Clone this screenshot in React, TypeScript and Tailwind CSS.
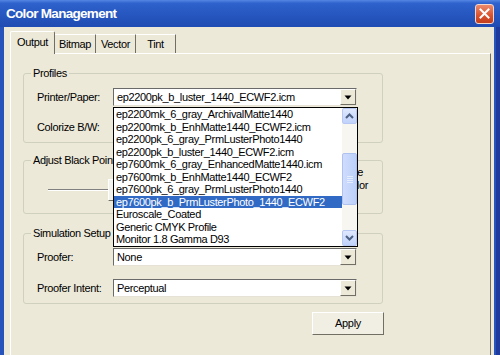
import React from "react";

const items = [
  "ep2200mk_6_gray_ArchivalMatte1440",
  "ep2200mk_b_EnhMatte1440_ECWF2.icm",
  "ep2200pk_6_gray_PrmLusterPhoto1440",
  "ep2200pk_b_luster_1440_ECWF2.icm",
  "ep7600mk_6_gray_EnhancedMatte1440.icm",
  "ep7600mk_b_EnhMatte1440_ECWF2",
  "ep7600pk_6_gray_PrmLusterPhoto1440",
  "ep7600pk_b_PrmLusterPhoto_1440_ECWF2",
  "Euroscale_Coated",
  "Generic CMYK Profile",
  "Monitor 1.8 Gamma D93",
];

function DownTri() {
  return (
    <svg width="8" height="5" viewBox="0 0 8 5">
      <path d="M0.5 0.5 L7.5 0.5 L4 4.5 Z" fill="#000" />
    </svg>
  );
}

function Select({ value }: { value: string }) {
  return (
    <div className="w-[244px] h-[18px] bg-white border-t border-l border-[#6a6a6a] border-r border-b border-r-[#e6e3d6] border-b-[#e6e3d6] flex items-center">
      <div className="flex-1 pl-[3px] leading-[16px] whitespace-nowrap overflow-hidden">{value}</div>
      <div className="w-[16px] h-[16px] bg-[#ece9d8] border-t border-l border-white border-r border-b border-r-[#716f64] border-b-[#716f64] flex items-center justify-center">
        <DownTri />
      </div>
    </div>
  );
}

function Group({
  label,
  className,
  children,
}: {
  label: string;
  className: string;
  children?: React.ReactNode;
}) {
  return (
    <div className={`relative w-[360px] border border-[#d0d0bf] rounded-[3px] ${className}`}>
      <div className="absolute -top-[8px] left-[7px] px-[2px] bg-[#ece9d8] leading-[14px]">{label}</div>
      {children}
    </div>
  );
}

function Chevron({ up }: { up: boolean }) {
  return (
    <svg width="9" height="6" viewBox="0 0 9 6">
      <path
        d={up ? "M1 5 L4.5 1.5 L8 5" : "M1 1 L4.5 4.5 L8 1"}
        fill="none"
        stroke="#4d6185"
        strokeWidth="2"
      />
    </svg>
  );
}

export default function App() {
  return (
    <div className="relative w-[500px] h-[355px] overflow-hidden bg-[#2654bb] flex flex-col font-['Liberation_Sans',Arial,sans-serif] text-[11px] tracking-[-0.35px] text-black">
      {/* Title bar */}
      <div className="h-[27px] shrink-0 flex items-center justify-between pl-[6px] pr-[6px] bg-[linear-gradient(to_bottom,#5486e4_0%,#2f62cc_12%,#2656bf_55%,#1f4cb2_100%)]">
        <div className="text-white font-bold text-[13.5px] tracking-[-0.7px] leading-[16px]">
          Color Management
        </div>
        <div className="w-[19px] h-[20px] rounded-[3px] border border-[#f4d6cc] bg-[linear-gradient(to_bottom,#eb8a6c,#d9512d_60%,#c23e1c)] flex items-center justify-center">
          <svg width="11" height="11" viewBox="0 0 11 11">
            <path d="M1.5 1.5 L9.5 9.5 M9.5 1.5 L1.5 9.5" stroke="#fff" strokeWidth="2" strokeLinecap="square" />
          </svg>
        </div>
      </div>

      {/* Body */}
      <div className="flex-1 ml-[4px] mr-[6px] bg-[#ece9d8] pl-[6px] pr-[3px] pt-[4px] flex flex-col relative">
        <div className="absolute right-[-6px] top-0 bottom-0 w-[4px] bg-[#1e3a9c]" />
        {/* Tabs */}
        <div className="flex items-end h-[23px] -mb-px relative z-10">
          <div className="w-[45px] h-[23px] bg-[#ece9d8] border-t border-l border-white border-r border-r-[#716f64] rounded-t-[2px] flex items-center justify-center pb-[2px]">
            Output
          </div>
          <div className="w-[41px] h-[19px] mb-px border-t border-white border-r border-r-[#716f64] flex items-center justify-center">
            Bitmap
          </div>
          <div className="w-[40px] h-[19px] mb-px border-t border-white border-r border-r-[#716f64] flex items-center justify-center">
            Vector
          </div>
          <div className="w-[40px] h-[19px] mb-px border-t border-white border-r border-r-[#716f64] flex items-center justify-center">
            Tint
          </div>
        </div>

        {/* Panel */}
        <div className="flex-1 border-t border-l border-white border-r border-r-[#716f64] pl-[12px] flex flex-col">
          <Group label="Profiles" className="mt-[19px] h-[70px] pt-[14px] pl-[13px] flex flex-col gap-[12px]">
            <div className="flex items-center h-[18px]">
              <div className="w-[76px]">Printer/Paper:</div>
              <Select value="ep2200pk_b_luster_1440_ECWF2.icm" />
            </div>
            <div className="flex items-center h-[18px]">
              <div className="w-[76px]">Colorize B/W:</div>
            </div>
          </Group>

          <Group label="Adjust Black Point" className="mt-[17px] h-[54px] flex items-start pl-[24px] pr-[14px]">
            <div className="mt-[17px] h-[23px] flex items-center">
              <div className="w-[60px] h-[2px] border-t border-[#808080] border-b border-b-white" />
              <div className="w-[12px] h-[22px] bg-[#f3f2ec] border-t border-l border-white border-r border-b border-r-[#716f64] border-b-[#716f64]" />
            </div>
            <div className="ml-auto mt-[5px] text-right leading-[13px]">
              <div className="pr-[5px]">Auto Scale</div>
              <div>Black Color</div>
            </div>
          </Group>

          <Group label="Simulation Setup" className="mt-[19px] h-[71px] pt-[14px] pl-[13px] flex flex-col gap-[13px]">
            <div className="flex items-center h-[18px]">
              <div className="w-[76px]">Proofer:</div>
              <Select value="None" />
            </div>
            <div className="flex items-center h-[18px]">
              <div className="w-[76px]">Proofer Intent:</div>
              <Select value="Perceptual" />
            </div>
          </Group>

          <div className="mt-[8px] ml-[289px] w-[72px] h-[23px] bg-[#f1efe4] border-t border-l border-white border-r border-b border-r-[#716f64] border-b-[#716f64] flex items-center justify-center">
            Apply
          </div>
        </div>
      </div>

      {/* Open dropdown list */}
      <div className="absolute left-[113px] top-[107px] w-[245px] h-[140px] border border-black bg-white flex z-20">
        <div className="flex-1 flex flex-col">
          {items.map((t, i) => (
            <div
              key={t}
              className={
                i === 7
                  ? "h-[12.55px] leading-[12.55px] pl-[2px] whitespace-nowrap bg-[#316ac5] text-white"
                  : "h-[12.55px] leading-[12.55px] pl-[2px] whitespace-nowrap"
              }
            >
              {t}
            </div>
          ))}
        </div>
        <div className="w-[15px] flex flex-col bg-[#f7f6f1]">
          <div className="h-[16px] rounded-[2px] border border-[#b7c9f3] bg-[linear-gradient(to_bottom,#dfe8fd,#c1d3fb)] flex items-center justify-center">
            <Chevron up />
          </div>
          <div className="flex-1 flex flex-col">
            <div className="mt-[29px] h-[52px] rounded-[2px] border border-[#aec2f0] bg-[linear-gradient(to_right,#cfdcfd,#bcd0fa)] flex flex-col items-center justify-center gap-[1px]">
              <div className="w-[6px] h-px bg-[#e6edfd]" />
              <div className="w-[6px] h-px bg-[#e6edfd]" />
              <div className="w-[6px] h-px bg-[#e6edfd]" />
              <div className="w-[6px] h-px bg-[#e6edfd]" />
            </div>
          </div>
          <div className="h-[16px] rounded-[2px] border border-[#b7c9f3] bg-[linear-gradient(to_bottom,#dfe8fd,#c1d3fb)] flex items-center justify-center">
            <Chevron up={false} />
          </div>
        </div>
      </div>
    </div>
  );
}
